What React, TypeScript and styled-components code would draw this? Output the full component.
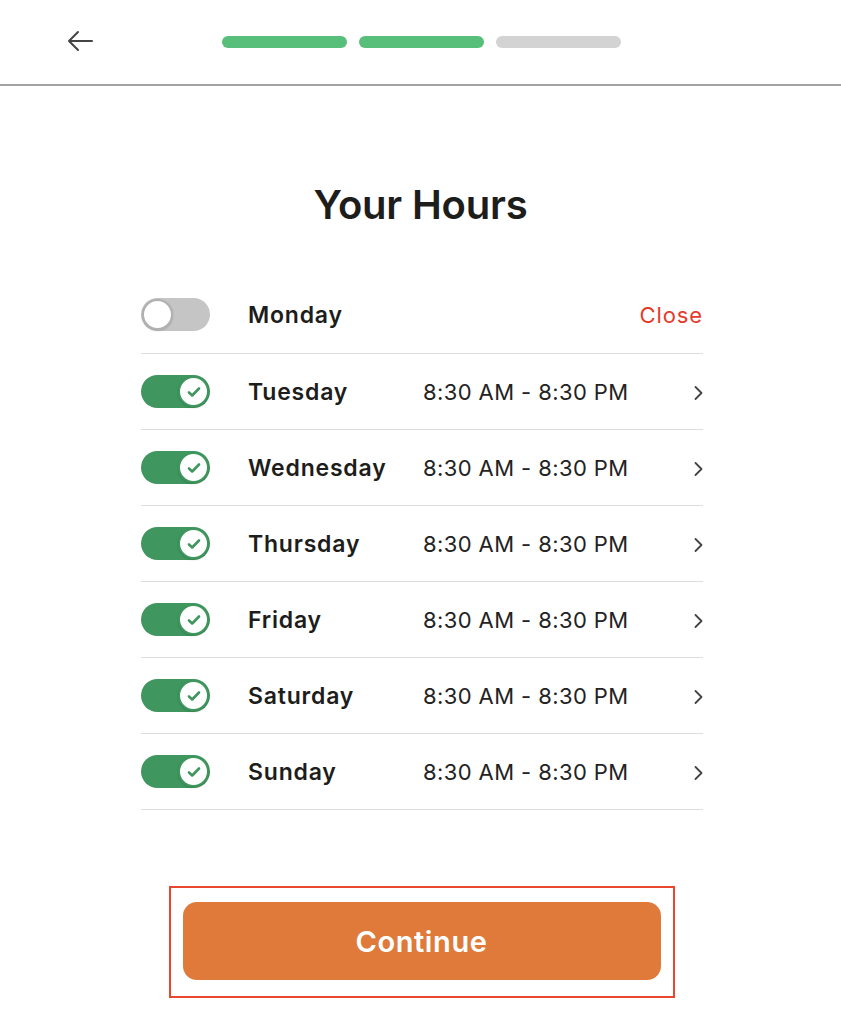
import styled, { createGlobalStyle } from "styled-components"

const GlobalStyle = createGlobalStyle`
    body {
        margin: 0;
        background: #ffffff;
        font-family: "Inter", "Noto Sans", sans-serif;
        color: #1d1d1b;
    }
`

const Page = styled.div`
    width: 841px;
    min-height: 1024px;
    display: flex;
    flex-direction: column;
`

const Header = styled.header`
    height: 84px;
    border-bottom: 2px solid #a3a3a3;
    display: flex;
    align-items: center;
    padding: 0 0 0 64px;
    box-sizing: content-box;
`

const BackButton = styled.button`
    width: 32px;
    height: 32px;
    padding: 0;
    border: none;
    background: none;
    display: flex;
    align-items: center;
    justify-content: center;
    margin-top: -2px;
`

const Progress = styled.div`
    display: flex;
    gap: 12px;
    margin-left: 126px;
    margin-top: -1px;
`

const Step = styled.div<{ $done: boolean }>`
    width: 125px;
    height: 12px;
    border-radius: 6px;
    background: ${p => (p.$done ? "#57bf79" : "#d3d3d3")};
`

const Title = styled.h1`
    margin: 94px 0 0;
    text-align: center;
    font-size: 40px;
    font-weight: 600;
    letter-spacing: -0.2px;
    color: #1d1d1b;
`

const List = styled.ul`
    list-style: none;
    margin: 54px 0 0 141px;
    padding: 0;
    width: 562px;
`

const Row = styled.li`
    height: 75px;
    border-bottom: 1px solid #dedede;
    display: flex;
    align-items: center;
    &:first-child {
        height: 63px;
        padding-bottom: 7px;
    }
`

const Toggle = styled.div<{ $on: boolean }>`
    width: 69px;
    height: 33px;
    border-radius: 17px;
    background: ${p => (p.$on ? "#3f965e" : "#c5c5c5")};
    display: flex;
    align-items: center;
    justify-content: ${p => (p.$on ? "flex-end" : "flex-start")};
    padding: 0 1px;
    box-sizing: border-box;
    flex-shrink: 0;
`

const Knob = styled.div<{ $on: boolean }>`
    width: 31px;
    height: 31px;
    border-radius: 50%;
    background: #ffffff;
    border: 2px solid ${p => (p.$on ? "#3f965e" : "#b0b0b0")};
    box-sizing: border-box;
    display: flex;
    align-items: center;
    justify-content: center;
    box-shadow: 0 1px 2px rgba(0, 0, 0, 0.15);
`

const DayName = styled.span`
    margin-left: 38px;
    width: 175px;
    font-size: 23px;
    font-weight: 600;
    letter-spacing: 0.8px;
    color: #1d1d1b;
`

const Hours = styled.span`
    font-size: 22px;
    font-weight: 400;
    letter-spacing: 0.4px;
    color: #232323;
    flex: 1;
`

const Closed = styled.span`
    margin-left: auto;
    font-size: 22px;
    letter-spacing: 0.9px;
    color: #e53b2c;
`

const Chevron = styled.div`
    width: 12px;
    display: flex;
    justify-content: flex-end;
    margin-top: 2px;
`

const Footer = styled.div`
    display: flex;
    justify-content: center;
    margin-top: 76px;
`

const Highlight = styled.div`
    width: 506px;
    height: 112px;
    border: 2px solid #e8462f;
    box-sizing: border-box;
    display: flex;
    align-items: center;
    justify-content: center;
    margin-left: 2px;
`

const ContinueButton = styled.button`
    width: 478px;
    height: 78px;
    border: none;
    border-radius: 14px;
    background: #df7a3b;
    color: #ffffff;
    font-family: "Inter", "Noto Sans", sans-serif;
    font-size: 29px;
    font-weight: 600;
    letter-spacing: 0.6px;
    margin-top: -2px;
`

const days = [
    { name: "Monday", on: false },
    { name: "Tuesday", on: true },
    { name: "Wednesday", on: true },
    { name: "Thursday", on: true },
    { name: "Friday", on: true },
    { name: "Saturday", on: true },
    { name: "Sunday", on: true },
]

const App = () => {
    return (
        <Page>
            <GlobalStyle />
            <Header>
                <BackButton aria-label="Back">
                    <svg width="28" height="24" viewBox="0 0 28 24" fill="none" stroke="#444" strokeWidth="2" strokeLinecap="round" strokeLinejoin="round">
                        <path d="M26 12H3M12 3l-9 9 9 9" />
                    </svg>
                </BackButton>
                <Progress>
                    <Step $done />
                    <Step $done />
                    <Step $done={false} />
                </Progress>
            </Header>
            <Title>Your Hours</Title>
            <List>
                {days.map(day => (
                    <Row key={day.name}>
                        <Toggle $on={day.on}>
                            <Knob $on={day.on}>
                                {day.on && (
                                    <svg width="14" height="12" viewBox="0 0 14 12" fill="none" stroke="#3f965e" strokeWidth="2.6" strokeLinecap="round" strokeLinejoin="round">
                                        <path d="M2 6.5l3.2 3L12 2.5" />
                                    </svg>
                                )}
                            </Knob>
                        </Toggle>
                        <DayName>{day.name}</DayName>
                        {day.on ? (
                            <>
                                <Hours>8:30 AM - 8:30 PM</Hours>
                                <Chevron>
                                    <svg width="9" height="16" viewBox="0 0 9 16" fill="none" stroke="#444" strokeWidth="1.8" strokeLinecap="round" strokeLinejoin="round">
                                        <path d="M1.5 2l6 6-6 6" />
                                    </svg>
                                </Chevron>
                            </>
                        ) : (
                            <Closed>Close</Closed>
                        )}
                    </Row>
                ))}
            </List>
            <Footer>
                <Highlight>
                    <ContinueButton>Continue</ContinueButton>
                </Highlight>
            </Footer>
        </Page>
    )
}

export default App
